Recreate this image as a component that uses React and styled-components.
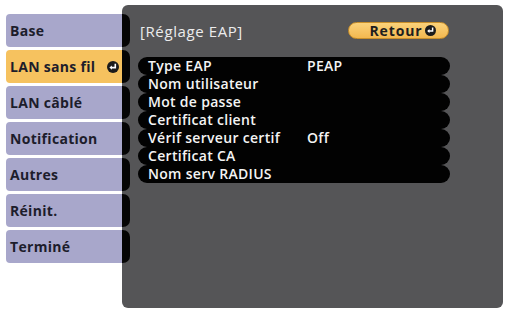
import React from 'react';
import styled, { createGlobalStyle } from 'styled-components';

const GlobalStyle = createGlobalStyle`
  html, body {
    margin: 0;
    padding: 0;
    background: #ffffff;
  }
  body {
    font-family: "Open Sans", "Liberation Sans", sans-serif;
  }
`;

const Screen = styled.div`
  display: flex;
  box-sizing: border-box;
  width: 506px;
  height: 309px;
  padding: 5px 3px 1px 6px;
`;

const Sidebar = styled.ul`
  position: relative;
  z-index: 1;
  display: flex;
  flex-direction: column;
  gap: 3px;
  width: 124px;
  margin: 0 -8px 0 0;
  padding: 9px 0 0;
  list-style: none;
`;

const MenuItem = styled.li`
  display: flex;
  align-items: center;
  justify-content: space-between;
  box-sizing: border-box;
  height: 33px;
  padding: 0 3px 0 4px;
  border-radius: 4px 7px 7px 4px;
  border-right: 8px solid #050505;
  background: ${(p) => (p.active ? '#f6c25f' : '#a8a7cb')};
  color: #1d1d2b;
  font-size: 14px;
  font-weight: 700;
  letter-spacing: 0.3px;
  white-space: nowrap;
`;

const Panel = styled.section`
  flex: 1;
  box-sizing: border-box;
  padding: 17px 0 0 16px;
  border-radius: 6px;
  background: #555557;
`;

const Header = styled.div`
  display: flex;
  align-items: center;
  justify-content: space-between;
  width: 311px;
  height: 17px;
  padding-left: 2px;
  box-sizing: border-box;
`;

const Title = styled.span`
  color: #ececec;
  font-size: 15px;
  font-weight: 500;
  letter-spacing: 0.6px;
`;

const BackButton = styled.button`
  display: flex;
  align-items: center;
  justify-content: center;
  gap: 2px;
  box-sizing: border-box;
  width: 101px;
  height: 17px;
  padding: 0 0 0 8px;
  border: 1px solid #c98f2a;
  border-radius: 9px;
  background: linear-gradient(#fbd27a, #f3b850);
  color: #1e1e1e;
  font-family: inherit;
  font-size: 14px;
  font-weight: 700;
  letter-spacing: 0.9px;
`;

const List = styled.div`
  display: flex;
  flex-direction: column;
  width: 312px;
  margin-top: 18px;
`;

const Row = styled.div`
  display: grid;
  grid-template-columns: 159px 1fr;
  align-items: center;
  height: 18px;
  padding-left: 10px;
  border-radius: 9px;
  background: #020202;
  color: #f4f4f4;
  font-size: 14px;
  font-weight: 600;
  letter-spacing: 0.3px;
  line-height: 18px;
  white-space: nowrap;
`;

const EnterIcon = ({ size = 12 }) => (
  <svg width={size} height={size} viewBox="0 0 12 12">
    <circle cx="6" cy="6" r="6" fill="#1b1b1b" />
    <path d="M8.3 2.8 V6.6 H4.2" stroke="#fff" strokeWidth="1.6" fill="none" />
    <path d="M2.4 6.6 L4.9 4.4 V8.8 Z" fill="#fff" />
  </svg>
);

const menu = ['Base', 'LAN sans fil', 'LAN câblé', 'Notification', 'Autres', 'Réinit.', 'Terminé'];

const rows = [
  ['Type EAP', 'PEAP'],
  ['Nom utilisateur', ''],
  ['Mot de passe', ''],
  ['Certificat client', ''],
  ['Vérif serveur certif', 'Off'],
  ['Certificat CA', ''],
  ['Nom serv RADIUS', ''],
];

export default function App() {
  return (
    <>
      <GlobalStyle />
      <Screen>
        <Sidebar>
          {menu.map((label) => (
            <MenuItem key={label} active={label === 'LAN sans fil'}>
              {label}
              {label === 'LAN sans fil' && <EnterIcon />}
            </MenuItem>
          ))}
        </Sidebar>
        <Panel>
          <Header>
            <Title>[Réglage EAP]</Title>
            <BackButton>
              Retour <EnterIcon size={11} />
            </BackButton>
          </Header>
          <List>
            {rows.map(([label, value]) => (
              <Row key={label}>
                <span>{label}</span>
                <span>{value}</span>
              </Row>
            ))}
          </List>
        </Panel>
      </Screen>
    </>
  );
}
